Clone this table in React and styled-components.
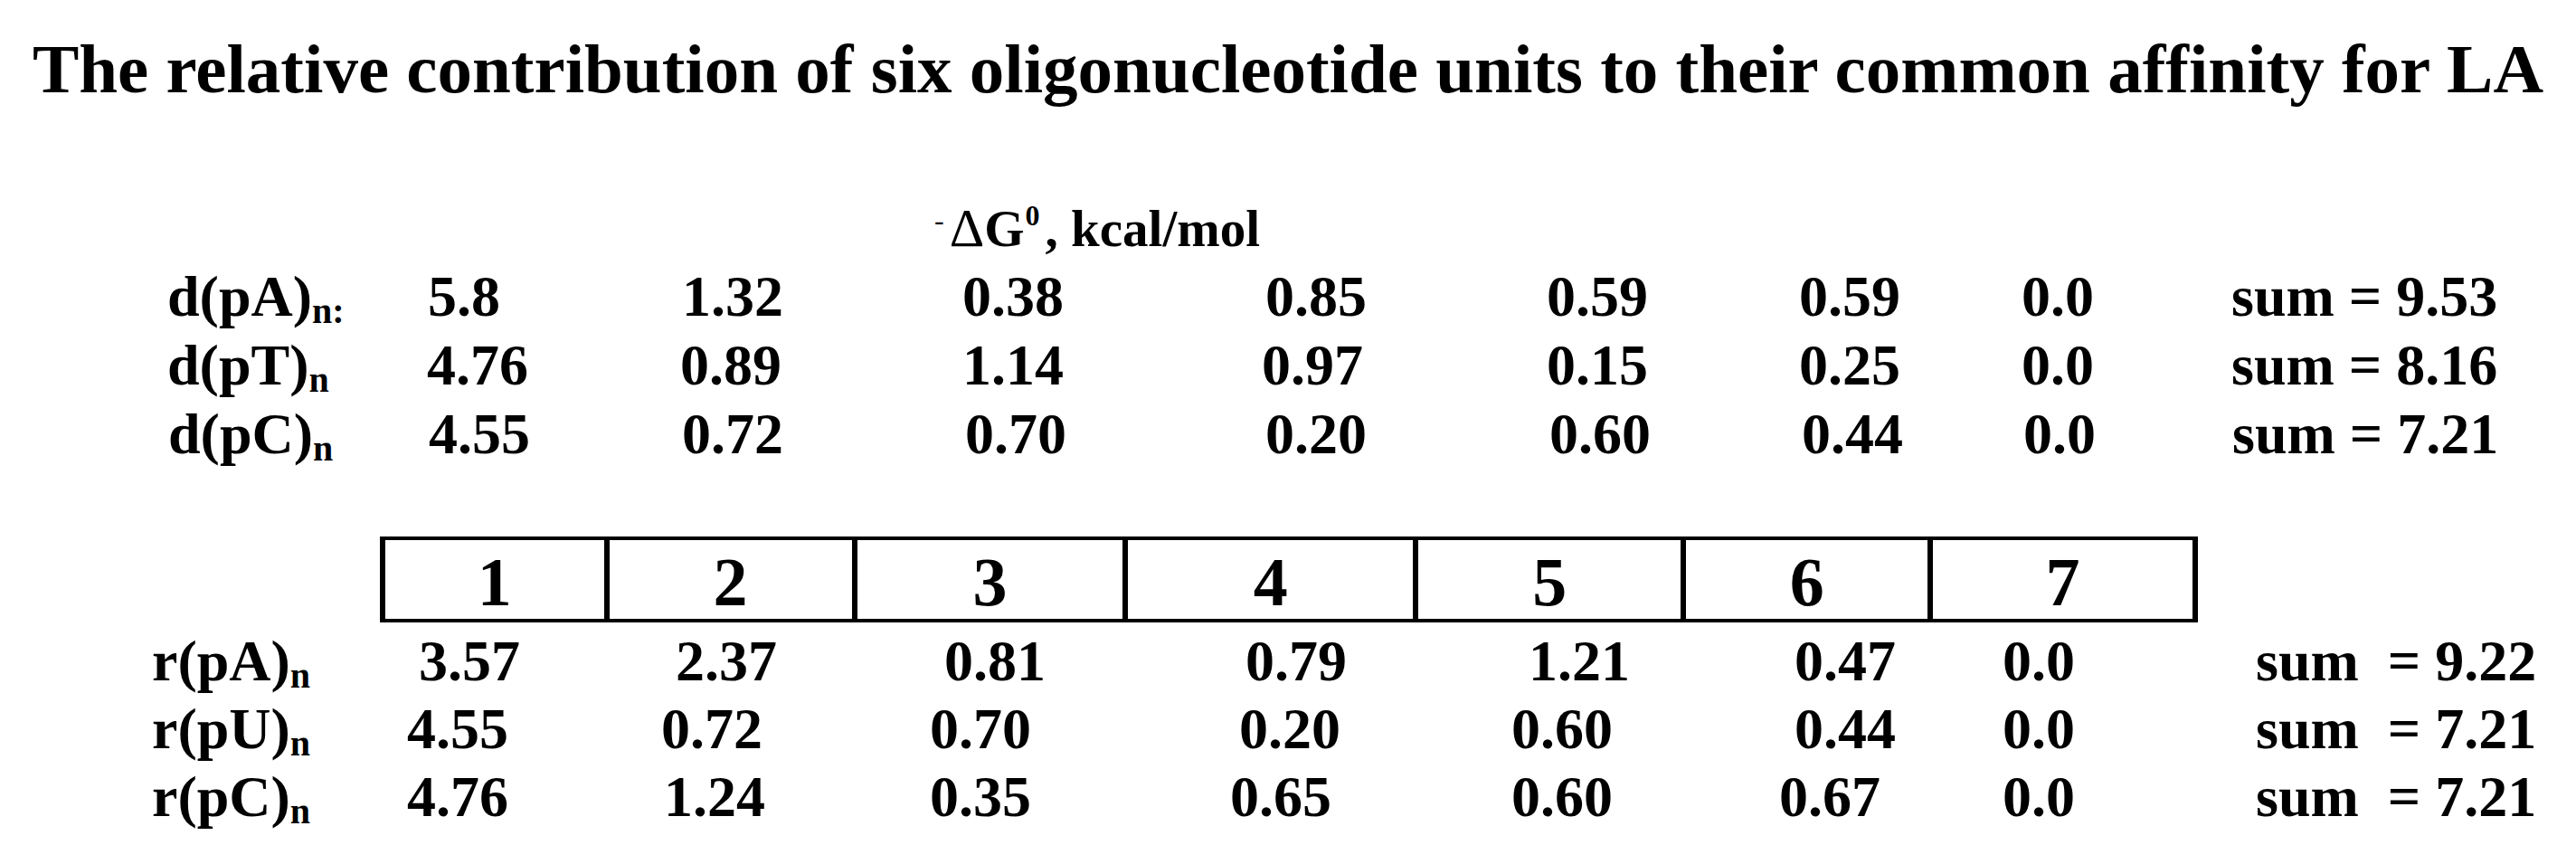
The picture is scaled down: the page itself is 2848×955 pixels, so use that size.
import React from "react";
import styled, { createGlobalStyle } from "styled-components";

const GlobalStyle = createGlobalStyle`
  html, body {
    margin: 0;
    padding: 0;
    background: #fff;
  }
  body {
    font-family: "Liberation Serif", "Times New Roman", serif;
    color: #000;
  }
`;

const dRows = [
  { label: "d(pA)", sub: "n:", starts: [185, 473, 754, 1064, 1399, 1710, 1989, 2235, 2467], values: ["5.8", "1.32", "0.38", "0.85", "0.59", "0.59", "0.0"], sum: "sum = 9.53" },
  { label: "d(pT)", sub: "n", starts: [185, 472, 752, 1064, 1395, 1710, 1989, 2235, 2467], values: ["4.76", "0.89", "1.14", "0.97", "0.15", "0.25", "0.0"], sum: "sum = 8.16" },
  { label: "d(pC)", sub: "n", starts: [186, 474, 754, 1067, 1399, 1713, 1992, 2237, 2468], values: ["4.55", "0.72", "0.70", "0.20", "0.60", "0.44", "0.0"], sum: "sum = 7.21" },
];

const rRows = [
  { label: "r(pA)", sub: "n", starts: [168, 463, 747, 1044, 1377, 1690, 1984, 2214, 2494], values: ["3.57", "2.37", "0.81", "0.79", "1.21", "0.47", "0.0"], sum: "sum  = 9.22" },
  { label: "r(pU)", sub: "n", starts: [168, 450, 731, 1028, 1370, 1671, 1984, 2214, 2494], values: ["4.55", "0.72", "0.70", "0.20", "0.60", "0.44", "0.0"], sum: "sum  = 7.21" },
  { label: "r(pC)", sub: "n", starts: [168, 450, 734, 1028, 1360, 1671, 1967, 2214, 2494], values: ["4.76", "1.24", "0.35", "0.65", "0.60", "0.67", "0.0"], sum: "sum  = 7.21" },
];

// widths of the numbered cells inside the box
const boxCols = [246, 273, 299, 321, 295, 272, 292];

export default function App() {
  return (
    <Page>
      <GlobalStyle />
      <Title>The relative contribution of six oligonucleotide units to their common affinity for LA</Title>

      <UnitLine>
        <Minus>-</Minus>
        <Delta>Δ</Delta>G<Sup>0</Sup>, kcal/mol
      </UnitLine>

      {dRows.map((row) => (
        <DataRow key={row.label} $starts={row.starts} $h={76}>
          <Cell>
            {row.label}
            <Sub>{row.sub}</Sub>
          </Cell>
          {row.values.map((v, i) => (
            <Cell key={i}>{v}</Cell>
          ))}
          <Cell>{row.sum}</Cell>
        </DataRow>
      ))}

      <UnitBox>
        {boxCols.map((w, i) => (
          <UnitCell key={i} $w={w} $first={i === 0}>
            {i + 1}
          </UnitCell>
        ))}
      </UnitBox>

      {rRows.map((row) => (
        <DataRow key={row.label} $starts={row.starts} $h={75}>
          <Cell>
            {row.label}
            <Sub>{row.sub}</Sub>
          </Cell>
          {row.values.map((v, i) => (
            <Cell key={i}>{v}</Cell>
          ))}
          <Cell>{row.sum}</Cell>
        </DataRow>
      ))}
    </Page>
  );
}

const Page = styled.div`
  width: 2848px;
  height: 955px;
  display: flex;
  flex-direction: column;
  font-weight: bold;
  overflow: hidden;
`;

const Title = styled.h1`
  margin: 38px 0 0 0;
  font-size: 77px;
  line-height: 76px;
  height: 76px;
  font-weight: bold;
  text-align: center;
  white-space: nowrap;
`;

const UnitLine = styled.div`
  margin-top: 100px;
  padding-left: 1033px;
  height: 76px;
  font-size: 57px;
  line-height: 76px;
  white-space: nowrap;
`;

const Minus = styled.span`
  font-size: 32px;
  font-weight: normal;
  vertical-align: 18px;
  line-height: 0;
  margin-right: 6px;
`;

const Delta = styled.span`
  font-weight: normal;
  font-size: 60px;
`;

const Sup = styled.span`
  font-size: 32px;
  vertical-align: 23px;
  line-height: 0;
  margin: 0 6px 0 1px;
`;

const DataRow = styled.div`
  display: grid;
  grid-template-columns: ${(p) =>
    p.$starts
      .slice(1)
      .map((s, i) => `${s - p.$starts[i]}px`)
      .join(" ")} auto;
  padding-left: ${(p) => p.$starts[0]}px;
  height: ${(p) => p.$h}px;
  line-height: ${(p) => p.$h}px;
  font-size: 64px;
  white-space: pre;
`;

const Cell = styled.span`
  display: block;
`;

const Sub = styled.span`
  font-size: 40px;
  vertical-align: -8px;
  line-height: 0;
`;

const UnitBox = styled.div`
  margin: 75px 0 5px 420px;
  display: flex;
  width: 2010px;
  box-sizing: border-box;
  border: solid #000;
  border-width: 4px 6px;
`;

const UnitCell = styled.div`
  box-sizing: border-box;
  width: ${(p) => p.$w + (p.$first ? 0 : 6)}px;
  height: 87px;
  padding-top: 6px;
  line-height: 81px;
  font-size: 76px;
  text-align: center;
  border-left: ${(p) => (p.$first ? "none" : "6px solid #000")};
`;
